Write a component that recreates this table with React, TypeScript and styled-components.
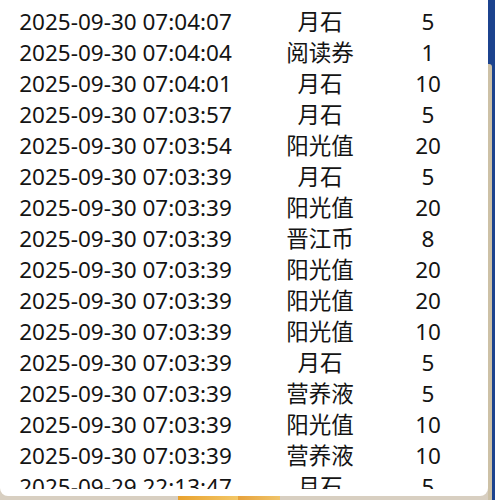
import React from "react";
import styled, { createGlobalStyle } from "styled-components";

const Global = createGlobalStyle`
  html, body { margin: 0; padding: 0; overflow: hidden; }
  body { background: #d8cfc1; }
`;

const Page = styled.div`
  width: 495px;
  height: 500px;
  display: grid;
  grid-template-columns: 488px 7px;
  grid-template-rows: 496px 4px;
  background: #d8cfc1;
  overflow: hidden;
`;

const Panel = styled.div`
  background: #ffffff;
  border-radius: 0 0 8px 8px;
  padding: 6px 0 7px;
  box-sizing: border-box;
  overflow: hidden;
`;

const List = styled.div`
  height: 100%;
  overflow: hidden;
`;

const Row = styled.div`
  display: grid;
  grid-template-columns: 251px 138px 78px;
  height: 31px;
  align-items: center;
  font-family: "Noto Sans", "Noto Sans CJK SC", sans-serif;
  font-size: 22.5px;
  color: #141414;
`;

const Cell = styled.div`
  text-align: center;
  white-space: nowrap;
  line-height: 31px;
`;

const Side = styled.div`
  display: grid;
  grid-template-rows: 64px 1fr;
  grid-row: 1 / span 2;
  grid-column: 2;
`;

const SideTop = styled.div`
  background: #1c438e;
`;

const SideBottom = styled.div`
  display: grid;
  grid-template-columns: 4px 3px;
  background: #1c438e;
`;

const Beige = styled.div`
  background: #cdc1a6;
  border-top-right-radius: 3px;
`;

const Bottom = styled.div`
  grid-column: 1;
  display: flex;
`;

const Strip = styled.div<{ $w: number; $bg: string }>`
  width: ${(p) => p.$w}px;
  background: ${(p) => p.$bg};
`;

const rows: [string, string, string][] = [
  ["2025-09-30 07:04:07", "月石", "5"],
  ["2025-09-30 07:04:04", "阅读券", "1"],
  ["2025-09-30 07:04:01", "月石", "10"],
  ["2025-09-30 07:03:57", "月石", "5"],
  ["2025-09-30 07:03:54", "阳光值", "20"],
  ["2025-09-30 07:03:39", "月石", "5"],
  ["2025-09-30 07:03:39", "阳光值", "20"],
  ["2025-09-30 07:03:39", "晋江币", "8"],
  ["2025-09-30 07:03:39", "阳光值", "20"],
  ["2025-09-30 07:03:39", "阳光值", "20"],
  ["2025-09-30 07:03:39", "阳光值", "10"],
  ["2025-09-30 07:03:39", "月石", "5"],
  ["2025-09-30 07:03:39", "营养液", "5"],
  ["2025-09-30 07:03:39", "阳光值", "10"],
  ["2025-09-30 07:03:39", "营养液", "10"],
  ["2025-09-29 22:13:47", "月石", "5"],
];

export default function App() {
  return (
    <>
      <Global />
      <Page>
        <Panel>
          <List>
            {rows.map((r, i) => (
              <Row key={i}>
                <Cell>{r[0]}</Cell>
                <Cell>{r[1]}</Cell>
                <Cell>{r[2]}</Cell>
              </Row>
            ))}
          </List>
        </Panel>
        <Side>
          <SideTop />
          <SideBottom>
            <Beige />
            <div />
          </SideBottom>
        </Side>
        <Bottom>
          <Strip $w={178} $bg="#d8cfc1" />
          <Strip $w={60} $bg="linear-gradient(90deg,#e9a22e,#f3c767)" />
          <Strip $w={42} $bg="linear-gradient(90deg,#e7a23c,#f0c46a)" />
          <Strip $w={208} $bg="#d8cfc1" />
        </Bottom>
      </Page>
    </>
  );
}
